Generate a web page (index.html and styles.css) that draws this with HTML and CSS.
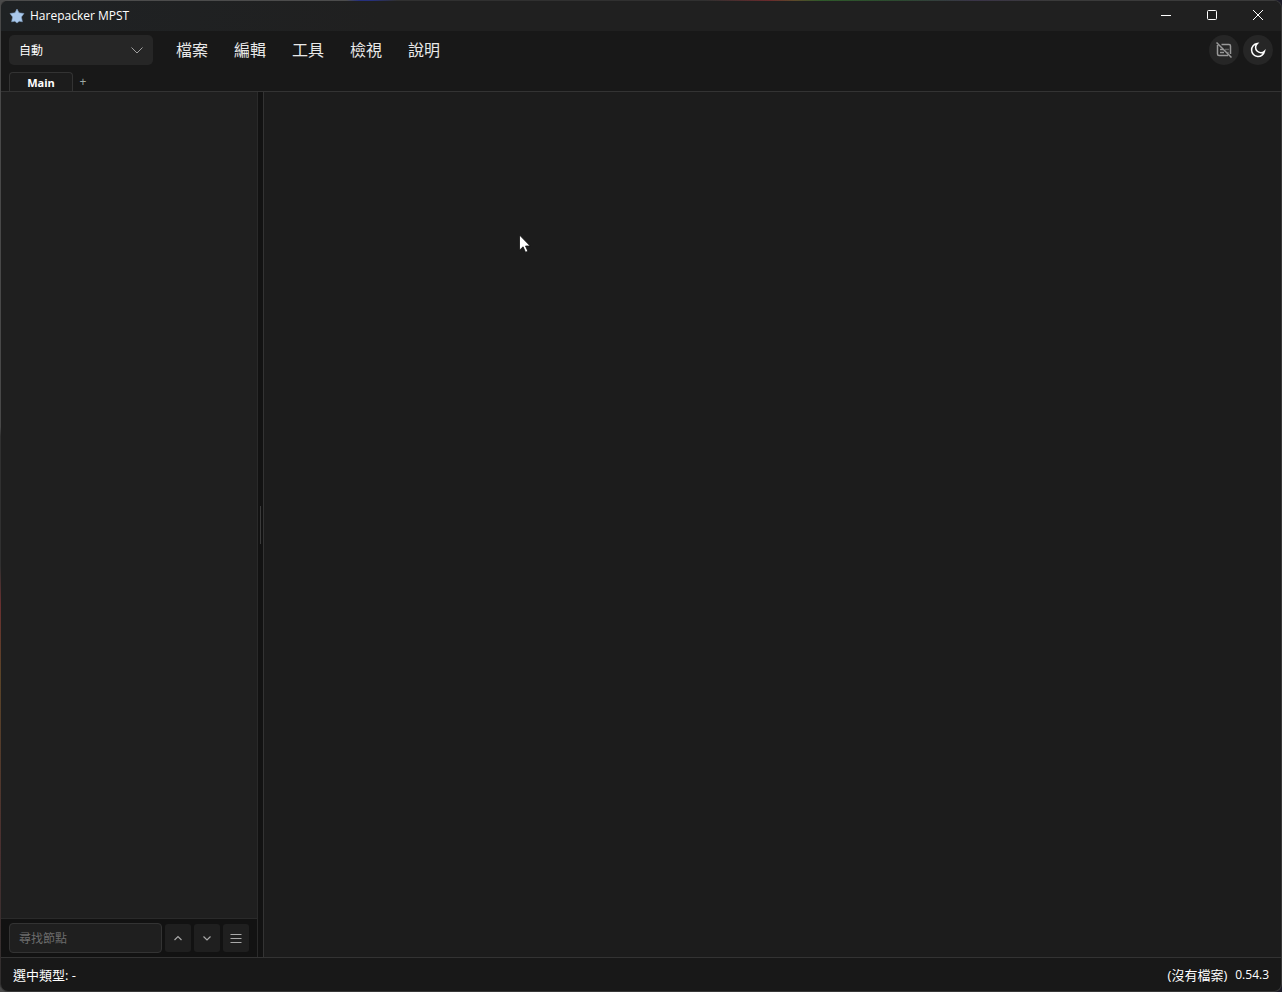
FILE: index.html
```
<!DOCTYPE html>
<html lang="zh-Hant">
<head>
    <meta charset="UTF-8">
    <meta name="viewport" content="width=device-width, initial-scale=1.0">
    <title>Harepacker MPST</title>
    <link rel="stylesheet" href="styles.css">
</head>
<body>
    <div class="window">
        <header class="titlebar">
            <svg class="app-icon" viewBox="0 0 16 16" aria-hidden="true">
                <path d="M8 1l2 3.800 5 .7-2.600 3.500 1 4.800-3.200-.6L8 15l-2.200-1.800-3.200.6 1-4.800L1 5.500l5-.7z" fill="#a9c8ec" stroke="#7f9dc0" stroke-width=".6" stroke-linejoin="round"/>
            </svg>
            <h1>Harepacker MPST</h1>
            <div class="window-buttons">
                <button type="button" aria-label="最小化">
                    <svg viewBox="0 0 12 12"><path d="M1 6.500h10"/></svg>
                </button>
                <button type="button" aria-label="最大化">
                    <svg viewBox="0 0 12 12"><rect x="1.500" y="1.500" width="9" height="9" rx="1"/></svg>
                </button>
                <button type="button" aria-label="關閉">
                    <svg viewBox="0 0 12 12"><path d="M1 1l10 10M11 1L1 11"/></svg>
                </button>
            </div>
        </header>

        <div class="toolbar">
            <div class="select-box">
                <select aria-label="版本">
                    <option>自動</option>
                </select>
                <svg viewBox="0 0 12 8" aria-hidden="true"><path d="M.5 1.500L6 7l5.500-5.500"/></svg>
            </div>
            <nav class="menu">
                <a href="#">檔案</a>
                <a href="#">編輯</a>
                <a href="#">工具</a>
                <a href="#">檢視</a>
                <a href="#">說明</a>
            </nav>
            <div class="tools">
                <button type="button" class="round muted" aria-label="字幕">
                    <svg viewBox="0 0 16 16">
                        <path d="M5.500 2.500H13A1.500 1.500 0 0 1 14.500 4v8M1.500 3v9A1.500 1.500 0 0 0 3 13.500h9M.5.5l15 15"/>
                        <path d="M4 7.500h3M4 10.500h4M9.500 7.500h1M11.500 7.500h1M11.500 10.500h1"/>
                    </svg>
                </button>
                <button type="button" class="round" aria-label="深色模式">
                    <svg viewBox="0 0 16 16"><path d="M7.200 1.600A6.500 6.500 0 1 0 14.500 9.200 4.800 4.800 0 0 1 7.200 1.600z"/></svg>
                </button>
            </div>
        </div>

        <div class="tabs">
            <button type="button" class="tab">Main</button>
            <button type="button" class="add-tab" aria-label="新增分頁">+</button>
        </div>

        <main class="workspace">
            <aside class="sidebar">
                <div class="tree"></div>
                <form class="search">
                    <input type="text" placeholder="尋找節點" aria-label="尋找節點">
                    <button type="button" aria-label="上一個">
                        <svg viewBox="0 0 12 12"><path d="M2.500 8L6 4.500 9.500 8"/></svg>
                    </button>
                    <button type="button" aria-label="下一個">
                        <svg viewBox="0 0 12 12"><path d="M2.500 4.500L6 8l3.500-3.500"/></svg>
                    </button>
                    <button type="button" aria-label="選單">
                        <svg viewBox="0 0 12 12"><path d="M.5 2.500h11M.5 6.500h11M.5 10.500h11"/></svg>
                    </button>
                </form>
            </aside>
            <div class="splitter"><span></span></div>
            <section class="content"></section>
        </main>

        <footer class="status">
            <span>選中類型: -</span>
            <span class="file">(沒有檔案)</span>
            <span class="version">0.54.3</span>
        </footer>
    </div>

    <svg class="cursor" viewBox="0 0 13 20" aria-hidden="true">
        <path d="M1.500 1v15.200l3.600-3.400 2.400 5.500 2.400-1-2.400-5.300h4.700z" fill="#fff" stroke="#111" stroke-width=".8"/>
    </svg>
</body>
</html>
```

FILE: styles.css
```
* {
    box-sizing: border-box;
}

body {
    margin: 0;
    background: linear-gradient(90deg, #4a4a4a, #1c1b28);
    color: #fff;
    font-family: "Open Sans", "Noto Sans CJK TC", sans-serif;
    font-size: 12px;
}

button, input, select {
    font: inherit;
    color: inherit;
    border: none;
    padding: 0;
}

svg {
    display: block;
    fill: none;
    stroke: currentColor;
}

.window {
    display: flex;
    flex-direction: column;
    height: 100vh;
    overflow: hidden;
    border: 1px solid transparent;
    border-radius: 8px;
    background:
        linear-gradient(#181818, #181818) padding-box,
        linear-gradient(90deg, #4c4c4c 27%, #26307c 28%, #26307c 29%, #303030 31%, #303030 55%, #6a2a2c 60%, #5c4a2a 62%, #2f5a2a 64%, #2c4a30 70%, #3a3448 76%, #3a3a3a 82%) 0 0 / 100% 1px no-repeat border-box,
        linear-gradient(#484848 43%, #303030 44%, #303030 57%, #6a3030 61%, #5a4428 68%, #4a3030 85%, #2e2e2e) 0 0 / 1px 100% no-repeat border-box,
        linear-gradient(#383838, #383838) border-box;
}

.titlebar {
    display: flex;
    align-items: center;
    flex: none;
    height: 30px;
    padding-left: 8px;
    background: linear-gradient(90deg, #1f2224, #202020 30%);
}

.app-icon {
    width: 16px;
    height: 16px;
    margin-right: 5px;
}

.titlebar h1 {
    margin: 0;
    font-size: 12px;
    font-weight: 400;
    line-height: 16px;
}

.window-buttons {
    display: flex;
    height: 28px;
    align-self: flex-start;
    margin-left: auto;
}

.window-buttons button {
    display: grid;
    place-items: center;
    width: 46px;
    background: none;
}

.window-buttons svg {
    width: 12px;
    height: 12px;
}

/* toolbar */
.toolbar {
    display: flex;
    align-items: center;
    flex: none;
    height: 38px;
    padding: 0 8px;
}

.select-box {
    display: grid;
    align-items: center;
    width: 144px;
}

.select-box select,
.select-box svg {
    grid-area: 1 / 1;
}

.select-box select {
    appearance: none;
    width: 100%;
    height: 30px;
    padding: 0 10px;
    background: #262626;
    border-radius: 5px;
}

.select-box svg {
    justify-self: end;
    width: 12px;
    height: 8px;
    margin-right: 10px;
    color: #a0a0a0;
    pointer-events: none;
}

.menu {
    display: flex;
    gap: 26px;
    margin-left: 23px;
}

.menu a {
    color: #e8e8e8;
    font-size: 16px;
    line-height: 24px;
    text-decoration: none;
}

.tools {
    display: flex;
    gap: 4px;
    margin-left: auto;
}

.round {
    display: grid;
    place-items: center;
    width: 30px;
    height: 30px;
    background: #262626;
    border-radius: 50%;
}

.round svg {
    width: 16px;
    height: 16px;
    stroke-width: 1.500;
}

.muted {
    color: #999;
}

/* tabs */
.tabs {
    display: flex;
    align-items: flex-end;
    flex: none;
    height: 23px;
    padding-left: 8px;
    border-bottom: 1px solid #333;
}

.tab {
    width: 64px;
    height: 19px;
    padding-top: 1px;
    background: #1c1c1c;
    border: 1px solid #333;
    border-bottom: none;
    border-radius: 4px 4px 0 0;
    font-size: 11px;
    font-weight: 700;
}

.add-tab {
    width: 20px;
    height: 19px;
    background: none;
    color: #a0aaa6;
    font-size: 12px;
}

/* workspace */
.workspace {
    display: flex;
    flex: 1;
    min-height: 0;
}

.sidebar {
    display: flex;
    flex-direction: column;
    flex: none;
    width: 257px;
    background: #1f1f1f;
    border-right: 1px solid #2a2a2a;
}

.tree {
    flex: 1;
}

.search {
    display: flex;
    align-items: center;
    gap: 3px;
    height: 39px;
    padding: 0 8px;
    background: #121212;
    border-top: 1px solid #2a2a2a;
}

.search input {
    flex: 1;
    min-width: 0;
    height: 30px;
    padding: 0 9px;
    background: #1f1f1f;
    border: 1px solid #333;
    border-radius: 4px;
}

.search input::placeholder {
    color: #6c6c6c;
}

.search button {
    display: grid;
    place-items: center;
    width: 26px;
    height: 28px;
    background: #1f1f1f;
    border-radius: 3px;
    color: #a8a8a8;
}

.search svg {
    width: 12px;
    height: 12px;
    stroke-width: 1.200;
}

.splitter {
    display: grid;
    place-items: center;
    flex: none;
    width: 6px;
    background: #121212;
    border-right: 1px solid #333;
}

.splitter span {
    width: 1px;
    height: 38px;
    background: #3a3a3a;
}

.content {
    flex: 1;
    background: #1c1c1c;
}

.status {
    display: flex;
    align-items: center;
    gap: 8px;
    flex: none;
    height: 34px;
    padding: 0 12px;
    border-top: 1px solid #333;
    font-size: 13px;
}

.status .file {
    margin-left: auto;
}

.status .version {
    font-size: 12px;
}

/* mouse pointer over the window */
.cursor {
    position: absolute;
    left: 518px;
    top: 234px;
    width: 13px;
    height: 20px;
}
```
